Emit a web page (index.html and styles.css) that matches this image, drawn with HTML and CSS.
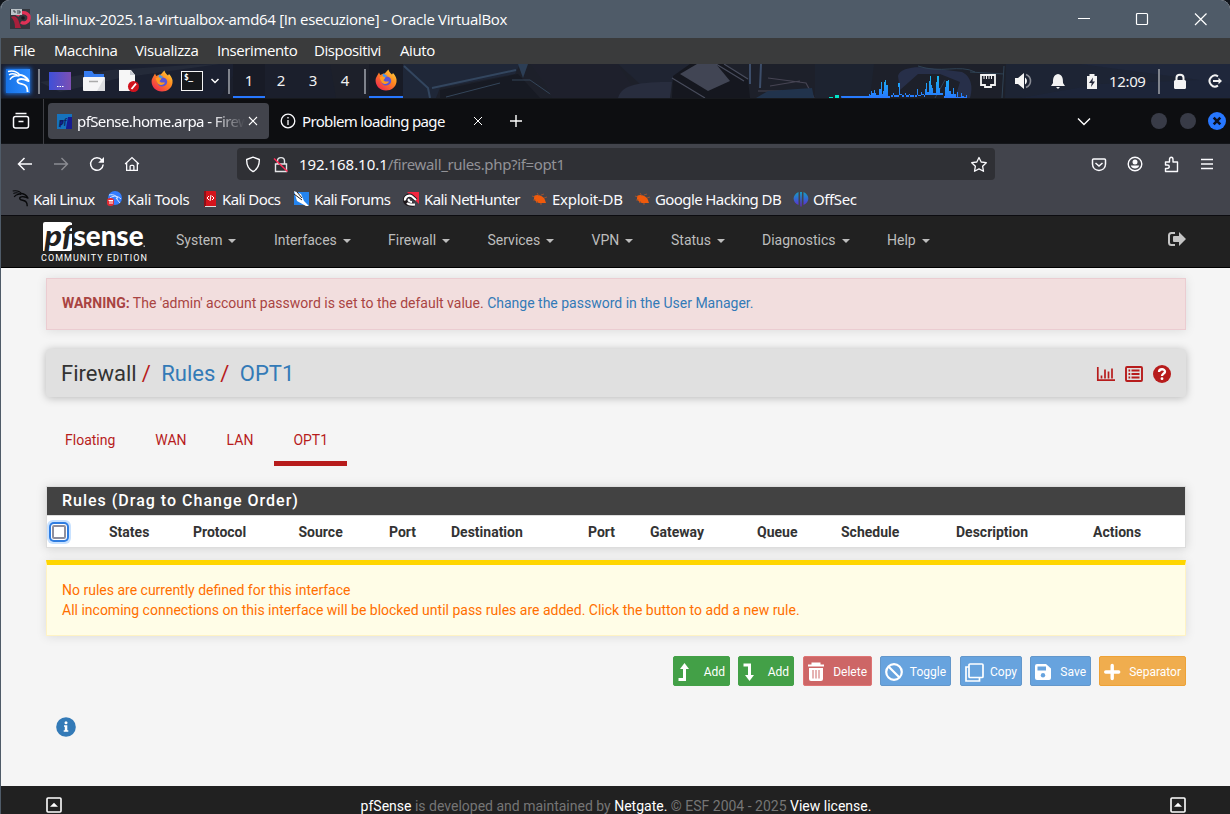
FILE: index.html
```html
<!DOCTYPE html>
<html lang="it">
<head>
<meta charset="utf-8">
<title>pfSense.home.arpa - Firewall: Rules: OPT1</title>
<link rel="stylesheet" href="styles.css">
</head>
<body>
<svg width="0" height="0" class="defs">
  <defs>
    <linearGradient id="ffo" x1="1" y1="0" x2="0.2" y2="1"><stop offset="0" stop-color="#ffe14a"/><stop offset=".45" stop-color="#ff8a1f"/><stop offset="1" stop-color="#f0274f"/></linearGradient>
    <linearGradient id="pur" x1="0" y1="0" x2="1" y2="0"><stop offset="0" stop-color="#3e50d8"/><stop offset="1" stop-color="#7d4fb3"/></linearGradient>
    <linearGradient id="off" x1="0" y1="0" x2="0" y2="16" gradientUnits="userSpaceOnUse"><stop offset="0" stop-color="#13a5c0"/><stop offset=".5" stop-color="#3367d0"/><stop offset="1" stop-color="#6a1fd0"/></linearGradient>
    <linearGradient id="bars" x1="0" y1="76" x2="0" y2="98" gradientUnits="userSpaceOnUse"><stop offset="0" stop-color="#18b8f0"/><stop offset="1" stop-color="#2878ff"/></linearGradient>
    <symbol id="firefox" viewBox="0 0 22 22">
      <path d="M2 7 4 3.6 5.2 6 8 4.8 C10 5 11 3 13.5.6 13.8 3 15.5 4 17 5.6 L18 4 C20.500 7 22 9 21.500 13 20.500 18.500 16.500 21.500 11 21.500 5 21.500.8 17 .6 12 .5 10 1 8.500 2 7z" fill="url(#ffo)"/>
      <path d="M6.500 10.500C8 7 13 6.500 15.500 9.500 17.500 12.500 15 16.500 11 16.500 8 16.500 6 14 6.500 10.500z" fill="#5a55d8"/>
      <path d="M4.500 8.500 8 6.500 10.500 8.600 8.500 11.300 10 12.500 14 12.500C13 15.500 8.500 16 6.500 13z" fill="#ff9a1f"/>
      <path d="M8 4.500 12 6.500 10 8.600 7.500 7z" fill="#4398ef"/>
    </symbol>
    <symbol id="bug" viewBox="0 0 16 14"><path d="M2 4 C5 2 9 3 12 6 L13 8 14 11 10 11C6 12 3 9 2 7z" fill="#ef5a0c"/><path d="M0 4 3 5M1 8H4M4 11 6 9M5 1 7 4M9 3 12 2M12 6 15 5M9 11 9 13" stroke="#a8552c" stroke-width=".8"/></symbol>
    <symbol id="dragon" viewBox="0 0 24 24">
      <path d="M1 1.500C6 .5 11 2 13.500 5.500M2 5C5 3.500 9 4 12 6M3 10C5 6.500 9 5.500 13 6.200" fill="none" stroke="currentColor" stroke-width="1.500"/>
      <path d="M12 5C16 5 20 6.500 22.500 11.500L18 9.800C13 8.500 9.500 10.500 11.500 13 13 15 18 14 20 17 21.500 19 21.500 21 21.500 23" fill="none" stroke="currentColor" stroke-width="2" stroke-linejoin="round"/>
    </symbol>
    <symbol id="up" viewBox="0 0 16 16"><rect x="1" y="1" width="14" height="14" rx="1" fill="none" stroke="#fff" stroke-width="1.600"/><path d="M4 9.700 8 5.700 12 9.700z" fill="#fff"/></symbol>
  </defs>
</svg>
<div class="window">

  <header class="titlebar">
    <svg class="app-icon" width="20" height="20" viewBox="0 0 20 20"><rect width="20" height="20" fill="#33363d"/><path d="M7 7C10 2 17 3 19 7 20 12 15 16 11 13" fill="none" stroke="#df3156" stroke-width="3.400"/><path d="M1 8C5 6 8 9 9 13L11 19 5 19C5 14 4 11 1 8z" fill="#a91f3b"/><circle cx="13" cy="9" r="1.800" fill="#15181d"/><rect x="1" y="0" width="11" height="6" fill="#bcc3c8"/><path d="M3 2h2v2M7 2h3v2h-3" fill="none" stroke="#3b4046"/></svg>
    <span class="win-title">kali-linux-2025.1a-virtualbox-amd64 [In esecuzione] - Oracle VirtualBox</span>
    <svg class="win-controls" width="140" height="14" viewBox="0 0 140 14" fill="none" stroke="#fff" stroke-width="1.200"><path d="M1 6.500H13"/><rect x="59.500" y="1.500" width="11" height="11" rx="1"/><path d="M118 1.500 129.500 13M129.500 1.500 118 13"/></svg>
  </header>

  <nav class="menubar">
    <span>File</span><span>Macchina</span><span>Visualizza</span><span>Inserimento</span><span>Dispositivi</span><span>Aiuto</span>
  </nav>

  <div class="panel">
    <svg class="wallpaper" width="1229" height="35" viewBox="1 64 1229 35">
      <rect x="1" y="64" width="1229" height="35" fill="#1d202a"/>
      <path d="M1 64H330L260 99H1z" fill="#1b2030"/>
      <path d="M40 82 110 70 190 65 220 64 120 78 60 92z" fill="#242a39"/>
      <path d="M240 64H330L336 98H220z" fill="#1b1f2c"/>
      <path d="M403 64H520L515 74 440 88 436 98H403z" fill="#1f2738"/>
      <path d="M404 66 428 88 430 98M432 88 516 70" fill="none" stroke="#33465f" stroke-width="2"/>
      <path d="M440 90 518 74 540 98H440z" fill="#171a23"/>
      <path d="M446 97 500 83M512 80 530 80 556 98" fill="none" stroke="#344559" stroke-width="1"/>
      <path d="M518 64H528L523 78z" fill="#2c3e55"/>
      <path d="M530 64 545 84 552 98H640L618 64z" fill="#1e202c"/>
      <path d="M618 64H690L672 82 640 84z" fill="#1f2432"/>
      <path d="M618 98C622 84 640 82 672 82L670 98z" fill="#282d3e"/>
      <path d="M673 76 690 64H725L748 80 750 98H672z" fill="#15171f"/>
      <path d="M680 74 697 64H716L730 81 708 91z" fill="#414554"/>
      <path d="M716 64 744 81M724 64 748 79M672 78 705 98" fill="none" stroke="#484c5c" stroke-width="1.200"/>
      <path d="M750 64 750 84M761 64 760 88" stroke="#3c4d69" stroke-width="2"/>
      <path d="M770 86 800 81M768 78 806 83 814 98M758 91H808" fill="none" stroke="#464453" stroke-width="1.200"/>
      <path d="M768 91 812 88 814 98H756z" fill="#21334c"/>
      <path d="M815 64H874L870 98H815z" fill="#1d2330"/>
      <path d="M900 90 898 76C900 68 915 66 930 68L962 72C974 78 972 92 970 98H955L960 82 940 74 918 74z" fill="#272f49"/>
      <path d="M918 66C940 74 960 64 975 72M935 98 945 80M1004 66 1002 98M970 72 1004 74" fill="none" stroke="#2f4254"/>
      <path d="M1006 64H1230V98H1005z" fill="#1d2434"/>
      <path d="M1020 98 1100 84 1200 80 1230 74V98z" fill="#1d2539"/>
      <path d="M1080 64 1230 84V64z" fill="#1f273b"/>
      <rect x="1" y="98" width="1229" height="1" fill="#17191d"/>
    </svg>
    <div class="panel-items">
      <span class="kali"><svg width="23" height="23"><use href="#dragon"/></svg></span>
      <i class="sep"></i>
      <svg width="22" height="18"><rect width="22" height="18" fill="url(#pur)"/><path d="M8 14.500h1.500M10.500 14.500h1.500M13 14.500h1.500" stroke="#fff" stroke-width="1.200"/></svg>
      <svg width="22" height="20"><path d="M1 0H9L11 3H21V10H1z" fill="#367cf0"/><rect y="6" width="22" height="14" rx="1" fill="#f5f5f6"/><path d="M22 6V20H14z" fill="#dcdde0"/><path d="M6 10.500H15" stroke="#aaa" stroke-width="1.600"/></svg>
      <svg width="22" height="22"><path d="M1 0H13L17 5V21H1z" fill="#f6f6f6"/><path d="M12 0 17 5H12z" fill="#c9ccd2"/><circle cx="15.500" cy="16.500" r="5.500" fill="#d1131e"/><path d="M13.500 19 18 13.700" stroke="#fff" stroke-width="1.800"/></svg>
      <svg width="22" height="22"><use href="#firefox"/></svg>
      <span class="term">$_</span>
      <svg width="10" height="8"><path d="M1.500 2 5 5.500 8.500 2" fill="none" stroke="#fff" stroke-width="1.500"/></svg>
      <i class="sep"></i>
      <span class="ws active">1</span><span class="ws">2</span><span class="ws">3</span><span class="ws">4</span>
      <i class="sep"></i>
      <span class="ws active task"><svg width="22" height="22"><use href="#firefox"/></svg></span>
      <svg class="graph" width="142" height="22" viewBox="829 76 142 22"><path fill="#00e5c8" d="M829 97h4v1h-4zM835 95h4v3h-4z"/><path fill="url(#bars)" d="M841 96h28v-2h1v1h1v-4h1v2h2v-3h1v3h1v2h3v-6h2v-7h1v12h1v-3h1v-9h1v-2h1v5h2v11h2v6h-48zM891 97h2v-4h1v4h5v-10h-1v-4h2v11h2v3h2v-2h1v-2h1v4h3v-3h1v3h4v-2h1v2h2v-8h1v7h3v-4h1v2h2v3h1v-8h1v-6h1v9h2v-11h1v-6h1v10h1v3h1v5h3v-11h1v-6h2v12h1v5h3v2h-52zM944 98v-2h1v-9h1v-6h2v-1h1v11h2v3h2v-6h1v6h2v3h1v-5h1v5h3v-4h1v3h2v1h2v-2h1v3z"/></svg>
      <svg width="18" height="16" fill="none" stroke="#f2f2f2" stroke-width="1.800"><path d="M2 2H16V12H12V14H6V12H2z"/><path d="M5 3V6M7.500 3V6M10 3V6M12.500 3V6" stroke-width="1"/></svg>
      <svg width="18" height="18"><path d="M1 6H4L10 1V17L4 12H1z" fill="#f5f5f5"/><path d="M11 5.500C13.500 7 13.500 11 11 12.500z" fill="#fff"/><path d="M12 2.500C18 5 18 13 12 15.500" fill="none" stroke="#8a8d96" stroke-width="1.600"/></svg>
      <svg width="16" height="17"><path d="M8 1C3 2 3 6 3 10L1 13H15L13 10C13 6 13 2 8 1zM6 14H10L8 16z" fill="#f2f2f2"/></svg>
      <svg width="12" height="17"><path d="M1 3H3.500V1H8.500V3H11V16H1z" fill="#f2f2f2"/><path d="M7 4.500 3 10H5.700L5 14 9 8.500H6.500z" fill="#24283a"/></svg>
      <span class="clock">12:09</span>
      <i class="sep"></i>
      <svg width="14" height="17"><rect x="1" y="7" width="12" height="9" rx="1.500" fill="#f4f4f4"/><path d="M3.500 8V4.800C3.500.7 10.500.7 10.500 4.800V8" fill="none" stroke="#f4f4f4" stroke-width="2"/></svg>
      <svg width="16" height="16" fill="none" stroke="#f2f2f2" stroke-width="2"><path d="M11 3.300A5.500 5.500 0 1 0 11 12.700M6 8H13"/><path d="M11.500 4.800 15 8 11.500 11.200z" fill="#f2f2f2" stroke="none"/></svg>
    </div>
  </div>

  <div class="tabstrip">
    <span class="tab-overview"><svg width="18" height="18" fill="none" stroke="#fbfbfe" stroke-width="1.500"><path d="M3.500 1.500H14.500M3.500 4.500H14.500Q16.500 4.500 16.500 6.500V14Q16.500 16 14.500 16H3.500Q1.500 16 1.500 14V6.500Q1.500 4.500 3.500 4.500zM6.500 9.500H11.500"/></svg></span>
    <div class="tab current">
      <svg class="pf-icon" width="15" height="15"><rect width="15" height="15" fill="#1673bd"/><path d="M3 14V6h4M9 14 11 3h4v12H9z" fill="#161b91"/><text x="2" y="11" class="pf-mini" fill="#0d1d5c">pf</text></svg>
      <span class="tab-title">pfSense.home.arpa - Firew</span>
      <svg width="10" height="10" stroke="#fff" stroke-width="1.100"><path d="M1 1 9 9M9 1 1 9"/></svg>
    </div>
    <div class="tab second">
      <svg width="16" height="16" fill="none" stroke="#fbfbfe" stroke-width="1.300"><circle cx="8" cy="8" r="6.800"/><path d="M8 4V5.500M8 7V12"/></svg>
      <span class="tab-title">Problem loading page</span>
      <svg width="10" height="10" stroke="#fff" stroke-width="1"><path d="M1 1 9 9M9 1 1 9"/></svg>
    </div>
    <svg class="new-tab" width="14" height="14" stroke="#fff" stroke-width="1.400"><path d="M1 7H13M7 1V13"/></svg>
    <svg class="tab-list" width="14" height="9" fill="none" stroke="#fff" stroke-width="1.400"><path d="M1 1.500 7 7.500 13 1.500"/></svg>
    <i class="dot"></i><i class="dot"></i>
    <svg class="close-dot" width="18" height="18"><circle cx="9" cy="9" r="9" fill="#2777ff"/><path d="M5.700 5.700 12.300 12.300M12.300 5.700 5.700 12.300" stroke="#0b1020" stroke-width="2.600"/></svg>
  </div>

  <div class="toolbar">
    <svg width="16" height="14" fill="none" stroke="#fbfbfe" stroke-width="1.500"><path d="M15 7H1.500M7.500 1 1.500 7 7.500 13"/></svg>
    <svg width="16" height="14" fill="none" stroke="#8b8c92" stroke-width="1.400"><path d="M1 7H14.500M8.500 1 14.500 7 8.500 13"/></svg>
    <svg width="16" height="16" fill="none" stroke="#fbfbfe" stroke-width="1.500"><path d="M13 4.200A6.300 6.300 0 1 0 14.200 8.500"/><path d="M15 1V6.800H9.200z" fill="#fbfbfe" stroke="none"/></svg>
    <svg width="16" height="16" viewBox="0 0 17 16" fill="none" stroke="#fbfbfe" stroke-width="1.400"><path d="M1.200 8 8.500 1.200 15.800 8M2.800 6.800V14.800H14.200V6.800M6.500 14.500V10.500Q6.500 9.500 7.500 9.500H9.500Q10.500 9.500 10.500 10.500V14.500"/></svg>
    <div class="urlbar">
      <svg width="16" height="17" fill="none" stroke="#fbfbfe" stroke-width="1.400"><path d="M8 1.200 14.300 3.500C14.500 9 13 13 8 15.600 3 13 1.500 9 1.700 3.500z" stroke-linejoin="round"/></svg>
      <svg width="16" height="17" fill="none" stroke="#e5e5e8" stroke-width="1.400"><path d="M2.500 8H13.500V15.500H2.500zM4.500 8V5C4.500.5 11.500.5 11.500 5V8"/><path d="M1 2.500 14.500 15.500" stroke="#ff2a56" stroke-width="1.500"/></svg>
      <span class="url">192.168.10.1<b>/firewall_rules.php?if=opt1</b></span>
      <svg width="18" height="17" fill="none" stroke="#fbfbfe" stroke-width="1.300"><path d="M9 1.500 11.200 6 16.300 6.700 12.600 10.200 13.500 15.300 9 12.900 4.500 15.300 5.400 10.200 1.700 6.700 6.800 6z" stroke-linejoin="round"/></svg>
    </div>
    <svg width="16" height="15" fill="none" stroke="#fbfbfe" stroke-width="1.500"><path d="M2.500 2H13.500Q14.500 2 14.500 3V7C14.500 15.500 1.500 15.500 1.500 7V3Q1.500 2 2.500 2zM4.500 6 8 9 11.500 6"/></svg>
    <svg width="16" height="16" fill="none" stroke="#fbfbfe" stroke-width="1.400"><circle cx="8" cy="8" r="6.800"/><circle cx="8" cy="6" r="2.500" fill="#fbfbfe" stroke="none"/><path d="M3.800 9.500H12.200C11.500 13.500 4.500 13.500 3.800 9.500z" fill="#fbfbfe" stroke="none"/></svg>
    <svg width="16" height="17" fill="none" stroke="#fbfbfe" stroke-width="1.400"><path d="M1.500 6H5.500V3.500C5.500.5 9 .5 9 3.500V6H13.500V15.500H1.500V12.500H3C6 12.500 6 9 3 9H1.500z" stroke-linejoin="round"/></svg>
    <svg width="14" height="12" stroke="#fbfbfe" stroke-width="1.300"><path d="M1 1.500H13M1 6H13M1 10.500H13"/></svg>
  </div>

  <div class="bookmarks">
    <span class="bm ink"><svg width="17" height="17"><use href="#dragon"/></svg>Kali Linux</span>
    <span class="bm"><svg width="17" height="17"><circle cx="9" cy="8" r="7" fill="#347dff"/><path d="M3 5C8 4 10 6 12 8L10 8 14 13M4 8C8 5 12 6 15 9" fill="none" stroke="#dce8ff"/><rect x="1" y="8" width="7" height="8" rx="3" fill="#e32b34"/><path d="M2.500 10.500H7M4 10.500V14M6 10.500V14" stroke="#fff"/></svg>Kali Tools</span>
    <span class="bm"><svg width="15" height="17"><rect x="1" y="1" width="12" height="16" rx="1" fill="#d5141c"/><path d="M1 1H3V17H1z" fill="#8e1018"/><path d="M2 16.500H13" stroke="#ddd"/><path d="M6 6 4 8 6 10M9 6 11 8 9 10M8 5 7 11" fill="none" stroke="#fff"/></svg>Kali Docs</span>
    <span class="bm"><svg width="17" height="17"><rect x="1" y="2" width="15" height="13" fill="#2484ef"/><path d="M1 1 8 4 11 11 16 16 13 16 4 11z" fill="#fff"/><path d="M1 4 9 10M4 2 9 8" stroke="#222"/></svg>Kali Forums</span>
    <span class="bm"><svg width="17" height="17"><path d="M4 2H16V14z" fill="#f2263f"/><path d="M13 10 9 6.500C6 4 1.500 7 2 10.500 2.500 14.500 8 15 11 14.500" fill="none" stroke="#1d171b" stroke-width="4"/><path d="M13 10 9 6.500C6 4 1.500 7 2 10.500M4 13C6 15 9 14.500 12 14.500M6 9C5 11 7 12 9 12" fill="none" stroke="#fff" stroke-width="2.200"/></svg>Kali NetHunter</span>
    <span class="bm"><svg width="16" height="14"><use href="#bug"/></svg>Exploit-DB</span>
    <span class="bm"><svg width="16" height="14"><use href="#bug"/></svg>Google Hacking DB</span>
    <span class="bm"><svg width="16" height="16" fill="url(#off)"><path d="M5.500 1V14C-1 11-1 4 5.500 1zM7 1H9L8.600 15.500H7.400zM10.500 1V14C17 11 17 4 10.500 1z"/></svg>OffSec</span>
  </div>

  <nav class="pf-nav">
    <svg class="pf-logo" width="108" height="42" viewBox="40 221 108 42">
      <path d="M45 222H70L72 223V249Q72 251 70 251H43V224Q43 222 45 222z" fill="#fff"/>
      <text x="44.500" y="246" class="logo-pf" textLength="28" lengthAdjust="spacingAndGlyphs">pf</text>
      <text x="73.500" y="246" class="logo-sense" textLength="70" lengthAdjust="spacingAndGlyphs">sense</text>
      <rect x="143.500" y="245.500" width="1.500" height="1.500" fill="#aaa"/>
      <text x="41" y="261" class="logo-ed" textLength="106">COMMUNITY EDITION</text>
    </svg>
    <div class="pf-menu">
      <span>System</span><span>Interfaces</span><span>Firewall</span><span>Services</span><span>VPN</span><span>Status</span><span>Diagnostics</span><span>Help</span>
    </div>
    <svg class="logout" width="18" height="14" fill="#c4c4c4"><path d="M7 1H3.500Q1 1 1 3.500V10.500Q1 13 3.500 13H7" fill="none" stroke="#c4c4c4" stroke-width="2"/><path d="M11 0 18 7 11 14V10H6Q5 10 5 9V5Q5 4 6 4H11z"/></svg>
  </nav>

  <main class="content">
    <div class="alert-danger"><strong>WARNING:</strong> The 'admin' account password is set to the default value. <a>Change the password in the User Manager.</a></div>

    <header class="page-head">
      <div class="crumbs"><span>Firewall</span><i>/</i><a>Rules</a><i>/</i><a>OPT1</a></div>
      <svg width="18" height="16" fill="none" stroke="#b71c1c" stroke-width="1.700"><path d="M.8 1V14.200H18M4.500 12.500V9.500M8 12.500V3.500M11.500 12.500V5.500M15 12.500V2.500"/></svg>
      <svg width="18" height="16" fill="none" stroke="#b71c1c" stroke-width="1.900"><rect x="1" y="1" width="16" height="14" rx="1"/><path d="M3.500 4.500H5.200M3.500 8H5.200M3.500 11.500H5.200M6.500 4.500H14.500M6.500 8H14.500M6.500 11.500H14.500"/></svg>
      <svg width="18" height="18"><circle cx="9" cy="9" r="9" fill="#b71c1c"/><path d="M6 7C6 3.300 12 3.500 12 6.700 12 8.500 9 8.600 9 11" fill="none" stroke="#fff" stroke-width="2.300"/><circle cx="9" cy="13.700" r="1.400" fill="#fff"/></svg>
    </header>

    <nav class="pf-tabs"><span>Floating</span><span>WAN</span><span>LAN</span><span class="on">OPT1</span></nav>

    <section class="rules">
      <h2>Rules (Drag to Change Order)</h2>
      <table>
        <colgroup><col class="c0"><col class="c1"><col class="c2"><col class="c3"><col class="c4"><col class="c5"><col class="c6"><col class="c7"><col class="c8"><col class="c9"><col class="c10"><col></colgroup>
        <thead><tr><th><span class="check"></span></th><th>States</th><th>Protocol</th><th>Source</th><th>Port</th><th>Destination</th><th>Port</th><th>Gateway</th><th>Queue</th><th>Schedule</th><th>Description</th><th>Actions</th></tr></thead>
      </table>
    </section>

    <div class="alert-warning">No rules are currently defined for this interface<br>All incoming connections on this interface will be blocked until pass rules are added. Click the button to add a new rule.</div>

    <div class="actions">
      <span class="btn green w57"><svg width="20" height="20"><path d="M.500 17.500H6.500V6" fill="none" stroke="#fff" stroke-width="3"/><path d="M2 7 6.500 1 11 7z" fill="#fff"/></svg>Add</span>
      <span class="btn green w56 gap9"><svg width="20" height="20"><path d="M.500 3H6.500V14" fill="none" stroke="#fff" stroke-width="3"/><path d="M2 13H11L6.500 19z" fill="#fff"/></svg>Add</span>
      <span class="btn red w69"><svg width="18" height="20"><path d="M0 3.500H16M4.500 3V1.500H11.500V3" fill="none" stroke="#fff" stroke-width="2"/><path d="M1 6H15V17Q15 19 13 19H3Q1 19 1 17z" fill="#fff"/><path d="M5 8V16.500M8 8V16.500M11 8V16.500" stroke="#c66"/></svg>Delete</span>
      <span class="btn blue w71 gap9"><svg width="18" height="18" fill="none" stroke="#fff" stroke-width="2.200"><circle cx="9" cy="9" r="7.800"/><path d="M3.500 3.500 14.500 14.500"/></svg>Toggle</span>
      <span class="btn blue w62"><svg width="19" height="19" fill="none" stroke="#fff" stroke-width="1.700"><rect x="4" y="1" width="14" height="13.500" rx="1"/><path d="M4 4H1V18H14.500V15"/></svg>Copy</span>
      <span class="btn blue w61"><svg width="18" height="18"><path d="M2 1H11L16 5.500V15Q16 17 14 17H2Q0 17 0 15V3Q0 1 2 1z" fill="#fff"/><rect x="2.500" y="3.500" width="8.500" height="4" fill="#67a3de"/><circle cx="8" cy="12.300" r="2.200" fill="#67a3de"/></svg>Save</span>
      <span class="btn orange w87"><svg width="18" height="18" stroke="#fff" stroke-width="3.400" stroke-linecap="round"><path d="M1.700 9H14.700M8.200 2.500V15.500"/></svg>Separator</span>
    </div>

    <svg class="info" width="20" height="20"><circle cx="10" cy="10" r="9.800" fill="#337ab7"/><circle cx="10" cy="5.700" r="1.500" fill="#fff"/><path d="M8 8.300H11.300V13.300H12.300V14.800H7.700V13.300H8.800V9.800H8z" fill="#fff"/></svg>
  </main>

  <footer class="pf-footer">
    <svg width="16" height="16"><use href="#up"/></svg>
    <span class="foot-text"><b>pfSense</b> is developed and maintained by <b>Netgate.</b> © ESF 2004 - 2025 <b>View license.</b></span>
    <svg width="16" height="16"><use href="#up"/></svg>
  </footer>
</div>
</body>
</html>
```

FILE: styles.css
```css
* { box-sizing: border-box; }
body { margin: 0; background: #10141a; font-family: Roboto, sans-serif; overflow: hidden; }
svg { display: block; flex: none; overflow: visible; }
.defs { position: absolute; }
.window { width: 1230px; height: 814px; border-left: 1px solid #4f5b68; border-radius: 9px 9px 0 0; overflow: hidden; display: flex; flex-direction: column; background: #f5f5f5; }
.window > * { flex: none; }

.titlebar { height: 38px; background: #4f5b68; display: flex; align-items: center; padding-left: 9px; color: #fff; font: 15px "Open Sans", sans-serif; }
.win-title { margin-left: 6px; white-space: nowrap; letter-spacing: -.32px; }
.win-controls { margin-left: auto; margin-right: 13px; }

.menubar { height: 26px; background: #3a3b3c; color: #fff; display: grid; grid-template-columns: 41px 81px 82px 97px 86px 60px; align-items: center; padding: 0 0 2px 12px; font: 15px "Open Sans", sans-serif; letter-spacing: -.4px; white-space: nowrap; }

.panel { height: 35px; position: relative; overflow: hidden; }
.wallpaper { position: absolute; left: 0; top: 0; }
.panel-items { position: relative; height: 34px; display: grid; align-items: center; padding-left: 5px; grid-template-columns: 32px 11px 34px 35px 33px 30px 29px 18px 5px 32px 32px 32px 35px 5px 460px 150px 35px 36px 36px 23px 49px 15px 34px 20px; }
.kali { width: 24px; height: 24px; padding: 1px; background: linear-gradient(90deg, #1773e6, #2d8bff); box-shadow: 0 0 4px 1px #1c6fe0; color: #fff; }
.sep { width: 2px; height: 25px; background: #7f838c; }
.term { width: 22px; height: 20px; border: 1px solid #f5f5f5; background: #16181c; color: #fff; font: bold 8px/10px "DejaVu Sans Mono", monospace; padding: 1px 0 0 2px; letter-spacing: -.5px; }
.ws { width: 32px; height: 34px; display: flex; align-items: center; justify-content: center; color: #f1f1f1; font: 15px "Noto Sans", sans-serif; border-bottom: 2px solid transparent; }
.ws.active { background: #181b26; border-bottom-color: #2777ff; }
.ws.task { width: 34px; }
.graph { align-self: end; overflow: hidden; }
.clock { color: #f1f1f1; font: 15px "Noto Sans", sans-serif; letter-spacing: -.35px; }

.tabstrip { height: 45px; background: #0d0e11; border-bottom: 1px solid #14161a; display: flex; align-items: center; color: #fbfbfe; font: 15px "Noto Sans", sans-serif; }
.tab-overview { width: 43px; height: 45px; padding: 13px 0 0 11px; border-right: 1px solid #3d3e43; }
.tab { display: flex; align-items: center; height: 36px; }
.tab.current { width: 221px; margin-left: 4px; padding: 0 10px 0 9px; background: #42444c; border-radius: 4px; }
.tab-title { white-space: nowrap; letter-spacing: -.65px; }
.tab.current .tab-title { width: 168px; margin: 0 3px 0 5px; letter-spacing: -.6px; mask-image: linear-gradient(90deg, #000 80%, transparent 100%); }
.pf-mini { font: italic bold 9px Lato, sans-serif; }
.tab.second { width: 203px; margin-left: 11px; }
.tab.second .tab-title { margin-left: 6px; margin-right: auto; }
.new-tab { margin-left: 26px; }
.tab-list { margin-left: 554px; margin-right: 60px; }
.dot { width: 16px; height: 16px; border-radius: 50%; background: #383b47; margin-right: 13px; flex: none; }
.close-dot { margin-left: -1px; }

.toolbar { height: 40px; background: #42444c; display: grid; align-items: center; grid-template-columns: 36px 36px 35px 113px 854px 36px 37px 36px 20px; padding-left: 16px; }
.urlbar { width: 758px; height: 32px; background: #2f3035; border-radius: 4px; display: flex; align-items: center; padding: 0 7px 0 8px; font: 15px "Noto Sans", sans-serif; color: #fbfbfe; }
.urlbar svg + svg { margin-left: 12px; }
.url { margin-left: 10px; margin-right: auto; letter-spacing: -.05px; }
.url b { font-weight: 400; color: #929297; letter-spacing: -.35px; }

.bookmarks { height: 32px; background: #42444c; border-bottom: 1px solid #0c0c10; padding: 0 0 2px 11px; display: grid; align-items: center; grid-template-columns: 94px 97px 90px 110px 129px 103px 158px 80px; color: #fbfbfe; font: 15px "Noto Sans", sans-serif; white-space: nowrap; letter-spacing: -.6px; }
.bm { display: flex; align-items: center; gap: 4px; }
.bm:nth-child(2) { letter-spacing: -.35px; }
.bm:nth-child(6) { letter-spacing: -.25px; }
.bm:nth-child(8) { letter-spacing: -.4px; }
.ink svg { color: #08090b; }

.pf-nav { height: 52px; background: #212121; border-bottom: 1px solid #000; display: flex; padding-left: 39px; }
.pf-logo { margin-top: 5px; }
.logo-pf { font: italic 900 29px Lato, sans-serif; fill: #212121; }
.logo-sense { font: 900 28px Lato, sans-serif; fill: #fff; }
.logo-ed { font: 9px Roboto, sans-serif; fill: #fff; }
.pf-menu { display: grid; grid-template-columns: 98px 114px 99.500px 104px 79.500px 91px 125px 60px; margin-left: 28px; padding-top: 16px; font-size: 14px; line-height: 16px; color: #bdbdbd; }
.pf-menu span::after { content: ""; display: inline-block; margin-left: 6px; vertical-align: 2px; border: 4px solid transparent; border-top-color: #bdbdbd; border-bottom: 0; }
.logout { margin: 16px 44px 0 auto; }

.content { height: 518px; padding: 10px 44px 0 45px; font-size: 14px; line-height: 20px; }
.content a { color: #337ab7; }
.alert-danger { height: 52px; padding: 14px 15px; background: #f2dede; border: 1px solid #ebccd1; color: #a94442; box-shadow: 0 1px 10px rgba(0,0,0,.1); }
.page-head { height: 48px; margin-top: 19px; padding: 2px 15px 0; border-radius: 4px; background: #e0e0e0; box-shadow: 0 1px 8px rgba(0,0,0,.25); display: flex; align-items: center; gap: 10px; }
.crumbs { flex: 1; font-size: 22px; line-height: 30px; color: #333; display: flex; }
.crumbs i { font-style: normal; color: #b71c1c; margin: 0 10.500px 0 5px; }
.pf-tabs { height: 50px; margin-top: 19px; display: flex; color: #b71c1c; }
.pf-tabs span { padding: 14px 20px 0 19px; }
.pf-tabs span + span { padding-left: 20px; }
.pf-tabs span.on { border-bottom: 5px solid #b71c1c; padding: 14px 19px 0; margin-left: 1px; }

.rules { height: 62px; margin-top: 20px; border: 1px solid #ddd; background: #fff; box-shadow: 0 1px 10px rgba(0,0,0,.15); }
.rules h2 { margin: 0; height: 29px; padding: 4px 15px 0; background: #424242; border-bottom: 1px solid #ddd; color: #fff; font-size: 16px; line-height: 19px; font-weight: 500; letter-spacing: 1px; }
.rules table { width: 1138px; table-layout: fixed; border-collapse: collapse; }
.rules th { height: 31px; padding: 0; text-align: left; font-weight: 700; color: #333; }
.c0 { width: 62px; } .c1 { width: 84px; } .c2 { width: 105.500px; } .c3 { width: 90.500px; } .c4 { width: 62px; } .c5 { width: 137px; } .c6 { width: 62px; } .c7 { width: 107px; } .c8 { width: 84px; } .c9 { width: 115px; } .c10 { width: 137px; }
.check { display: block; width: 14px; height: 14px; margin-left: 5px; border: 2px solid #8f8f9d; border-radius: 2px; background: #fff; box-shadow: 0 0 0 1px #fff, 0 0 0 3px #2f7de1, 0 0 0 5px #c9e2ff; }

.alert-warning { height: 76px; margin-top: 12px; padding: 15px; border: 1px solid #fff3c4; border-top: 5px solid #ffd600; background: #fffde7; color: #ff6f00; box-shadow: 0 1px 10px rgba(0,0,0,.1); }

.actions { display: flex; justify-content: flex-end; gap: 8px; margin-top: 20px; }
.btn { height: 30px; display: flex; align-items: center; justify-content: space-between; padding: 2px 4px 0; border: 1px solid; border-radius: 2px; color: #fff; font-size: 12px; }
.gap9 { margin-right: 1px; }
.green { background: #43a047; border-color: #43a047; }
.red { background: #cd6666; border-color: #df7474; }
.blue { background: #67a3de; border-color: #6397cb; }
.orange { background: #f0ad4e; border-color: #eea236; }
.w57 { width: 57px; } .w56 { width: 56px; } .w69 { width: 69px; } .w71 { width: 71px; } .w62 { width: 62px; } .w61 { width: 61px; } .w87 { width: 87px; }
.info { margin: 30.500px 0 0 10px; }

.pf-footer { height: 28px; background: #212121; display: flex; justify-content: space-between; padding: 11px 44px 0 45px; color: #757575; font-size: 14px; }
.foot-text { line-height: 18px; }
.foot-text b { font-weight: 400; color: #fff; }
```
